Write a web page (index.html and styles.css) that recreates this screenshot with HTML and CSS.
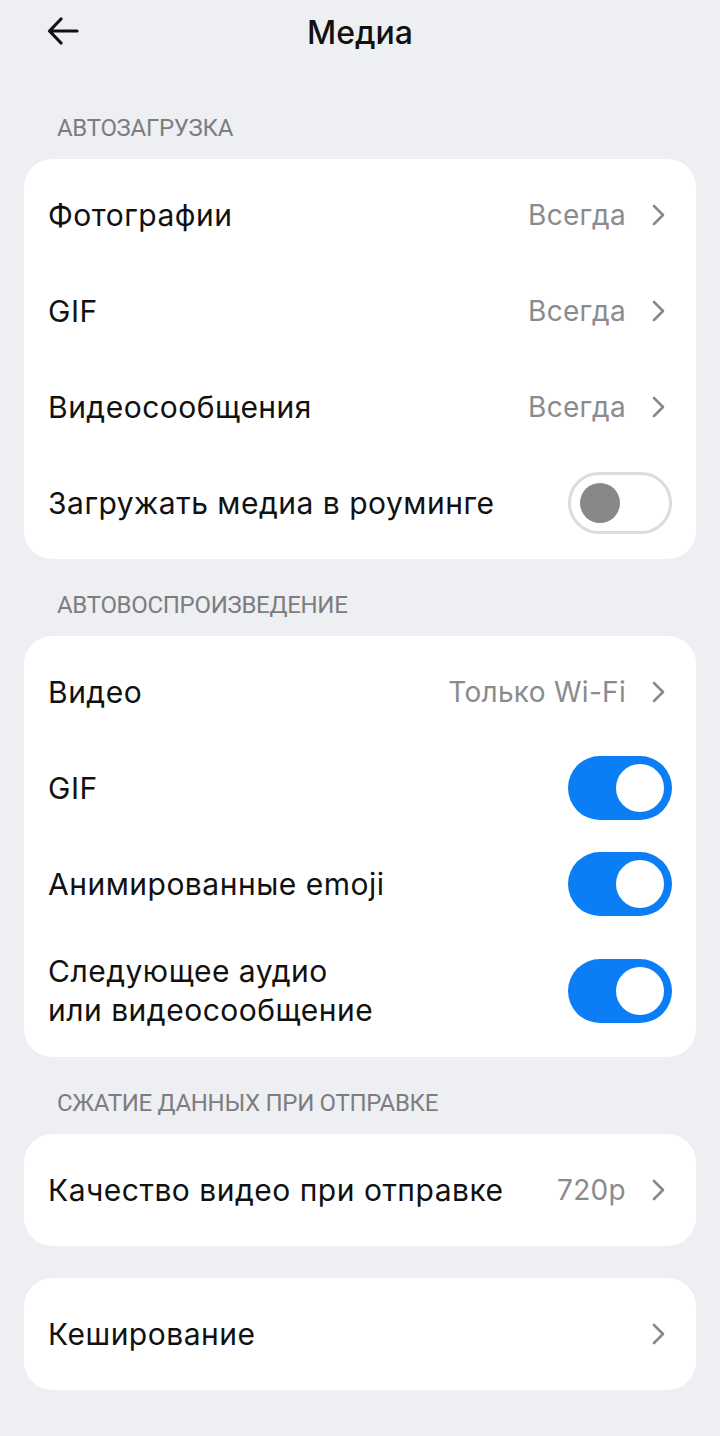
FILE: index.html
```html
<!DOCTYPE html>
<html lang="ru">
<head>
<meta charset="utf-8">
<title>Медиа</title>
<link rel="stylesheet" href="styles.css">
</head>
<body>
<div class="screen">
  <header class="topbar">
    <button class="back" aria-label="Назад">
      <svg width="32" height="28" viewBox="0 0 32 28"><path d="M30 14H3M14 2L2.5 14L14 26" fill="none" stroke="#111" stroke-width="3.2" stroke-linecap="round" stroke-linejoin="round"/></svg>
    </button>
    <h1 class="title">Медиа</h1>
  </header>
  <main class="content">
    <div class="label">АВТОЗАГРУЗКА</div>
    <section class="card">
      <div class="row"><span class="name">Фотографии</span><span class="value">Всегда</span><span class="chev"></span></div>
      <div class="row"><span class="name">GIF</span><span class="value">Всегда</span><span class="chev"></span></div>
      <div class="row"><span class="name">Видеосообщения</span><span class="value">Всегда</span><span class="chev"></span></div>
      <div class="row"><span class="name">Загружать медиа в роуминге</span><span class="toggle off"><span class="knob"></span></span></div>
    </section>

    <div class="label">АВТОВОСПРОИЗВЕДЕНИЕ</div>
    <section class="card">
      <div class="row"><span class="name">Видео</span><span class="value">Только Wi-Fi</span><span class="chev"></span></div>
      <div class="row"><span class="name">GIF</span><span class="toggle on"><span class="knob"></span></span></div>
      <div class="row"><span class="name">Анимированные emoji</span><span class="toggle on"><span class="knob"></span></span></div>
      <div class="row tall"><span class="name">Следующее аудио<br>или видеосообщение</span><span class="toggle on"><span class="knob"></span></span></div>
    </section>

    <div class="label">СЖАТИЕ ДАННЫХ ПРИ ОТПРАВКЕ</div>
    <section class="card">
      <div class="row"><span class="name">Качество видео при отправке</span><span class="value">720p</span><span class="chev"></span></div>
    </section>

    <section class="card solo">
      <div class="row"><span class="name">Кеширование</span><span class="chev"></span></div>
    </section>
  </main>
</div>
</body>
</html>
```

FILE: styles.css
```css
* { box-sizing: border-box; }
html, body { margin: 0; padding: 0; }
body {
  background: #eeeff3;
  font-family: Inter, Roboto, "Noto Sans", "Liberation Sans", sans-serif;
  color: #111;
}
.screen { width: 720px; min-height: 1436px; }
.topbar {
  height: 64px;
  display: flex;
  align-items: center;
  justify-content: center;
  position: relative;
}
.back {
  position: absolute;
  left: 47px;
  top: 17px;
  background: none;
  border: 0;
  padding: 0;
  width: 32px;
  height: 28px;
  display: block;
}
.back svg { display: block; }
.title {
  margin: 0;
  font-size: 32px;
  font-weight: 500;
}
.content { padding: 18px 24px 40px; }
.label {
  padding: 31px 0 16px 33px;
  line-height: 30px;
  font-family: Roboto, "Liberation Sans", sans-serif;
  font-size: 24px;
  color: #7d7d80;
  letter-spacing: -0.3px;
}
.card {
  background: #fff;
  border-radius: 28px;
  padding: 8px 0;
}
.card.solo { margin-top: 32px; }
.row {
  height: 96px;
  display: flex;
  align-items: center;
  padding: 0 24px;
}
.row.tall { height: 117px; }
.name {
  flex: 1;
  font-size: 30px;
  line-height: 39px;
  letter-spacing: 0.5px;
  color: #111;
}
.value {
  font-size: 28px;
  letter-spacing: 0.3px;
  color: #8b8b8e;
  margin-right: 26px;
}
.chev {
  width: 13px;
  height: 22px;
  margin-right: 7px;
  background: no-repeat center / 13px 22px url("data:image/svg+xml,%3Csvg xmlns='http://www.w3.org/2000/svg' width='13' height='22' viewBox='0 0 13 22'%3E%3Cpath d='M2 2L11 11L2 20' fill='none' stroke='%23888' stroke-width='2.6' stroke-linecap='round' stroke-linejoin='round'/%3E%3C/svg%3E");
}
.toggle {
  width: 104px;
  height: 64px;
  border-radius: 32px;
  display: flex;
  align-items: center;
  flex-shrink: 0;
}
.toggle.on {
  background: #0b7ef5;
  justify-content: flex-end;
  padding-right: 8px;
}
.toggle.on .knob {
  width: 48px;
  height: 48px;
  border-radius: 50%;
  background: #fff;
}
.toggle.off {
  background: #fff;
  border: 3px solid #dcdcdc;
  height: 62px;
  padding-left: 9px;
}
.toggle.off .knob {
  width: 40px;
  height: 40px;
  border-radius: 50%;
  background: #888;
}
```
